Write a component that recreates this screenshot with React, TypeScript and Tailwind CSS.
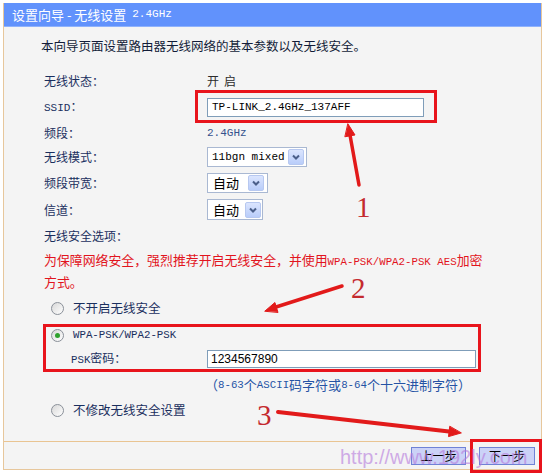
import React from "react";

function Radio({ checked }: { checked?: boolean }) {
  return (
    <span className="w-[13px] h-[13px] shrink-0 rounded-full border border-[#8a9099] bg-linear-to-br from-[#d8d8d8] to-white flex items-center justify-center">
      {checked && <span className="w-[5px] h-[5px] rounded-full bg-[#2ea12e]" />}
    </span>
  );
}

function DropBtn() {
  return (
    <span className="w-[16px] h-[16px] shrink-0 rounded-[2px] border border-[#b7c8f0] bg-linear-to-b from-[#dbe5fe] to-[#b9cdfa] flex items-center justify-center">
      <svg width="10" height="10" viewBox="0 0 10 10">
        <polyline points="2,3.5 5,6.5 8,3.5" fill="none" stroke="#4b5f8a" strokeWidth="2" />
      </svg>
    </span>
  );
}

export default function App() {
  return (
    <div className="relative w-[545px] h-[475px] bg-white pt-[3px] pl-[3px] font-['Noto_Sans_CJK_SC',sans-serif]">
      <div className="w-[539px] border-x border-b border-[#e7c79c]">
        {/* title bar */}
        <div className="h-[24px] bg-[#6192fc] border-b border-[#8fb2fc] flex items-center pl-[8px] text-white text-[13px] leading-none whitespace-pre">
          设置向导 - 无线设置 <span className="ml-[3px] font-['Liberation_Mono',monospace] text-[11px]">2.4GHz</span>
        </div>

        {/* body */}
        <div className="h-[415px] bg-[#f4f4f4] border-b border-[#e9c492] pl-[40px] pt-[10px] text-[12px] text-[#1a2f5e]">
          <div className="h-[18px] -ml-[3px] flex items-center text-[12.5px] text-[#121c38]">
            本向导页面设置路由器无线网络的基本参数以及无线安全。
          </div>

          <div className="mt-[17px] h-[18px] flex items-center">
            <span className="w-[163px]">无线状态：</span>
            <span className="text-[#2b2b2b] tracking-[5px]">开启</span>
          </div>

          <div className="h-[33px] flex items-center">
            <span className="w-[163px] font-['Liberation_Mono',monospace] text-[11px]">
              SSID<span className="font-['Noto_Sans_CJK_SC',sans-serif] text-[12px]">：</span>
            </span>
            <div className="-ml-[12px] h-[33px] border-[3px] border-[#e8141c] pl-[9px] pr-[10px] pt-[5px] pb-[3px]">
              <div className="w-[217px] h-[19px] bg-white border border-[#7f9db9] pl-[4px] flex items-center font-['Liberation_Mono',monospace] text-[11px] text-black">
                TP-LINK_2.4GHz_137AFF
              </div>
            </div>
          </div>

          <div className="mt-px h-[18px] flex items-center">
            <span className="w-[163px]">频段：</span>
            <span className="font-['Liberation_Mono',monospace] text-[11px] text-[#34528c]">2.4GHz</span>
          </div>

          <div className="mt-[5px] h-[20px] flex items-center">
            <span className="w-[163px]">无线模式：</span>
            <div className="w-[100px] h-[20px] bg-white border border-[#a9b8d2] flex items-center justify-between pl-[4px] pr-[2px]">
              <span className="font-['Liberation_Mono',monospace] text-[11px] text-black">11bgn mixed</span>
              <DropBtn />
            </div>
          </div>

          <div className="mt-[6px] h-[20px] flex items-center">
            <span className="w-[163px]">频段带宽：</span>
            <div className="w-[61px] h-[20px] bg-white border border-[#a9b8d2] flex items-center justify-between pl-[5px] pr-[3px]">
              <span className="text-[13px] text-black">自动</span>
              <DropBtn />
            </div>
          </div>

          <div className="mt-[6px] h-[21px] flex items-center">
            <span className="w-[163px]">信道：</span>
            <div className="w-[56px] h-[21px] bg-white border border-[#a9b8d2] flex items-center justify-between pl-[5px] pr-px">
              <span className="text-[13px] text-black">自动</span>
              <DropBtn />
            </div>
          </div>

          <div className="mt-[7px] h-[18px] flex items-center">无线安全选项：</div>

          <div className="mt-[5px] w-[450px] text-[12.9px] leading-[20px] text-[#e2141e]">
            为保障网络安全，强烈推荐开启无线安全，并使用<span className="font-['Liberation_Mono',monospace] text-[10.75px]">WPA-PSK/WPA2-PSK AES</span>加密
            <br />
            方式。
          </div>

          <div className="mt-[7px] h-[18px] flex items-center gap-[9px] pl-[7px] text-[12.5px]">
            <Radio />
            <span>不开启无线安全</span>
          </div>

          <div className="mt-[7px] -ml-px w-[438px] h-[48px] border-[3px] border-[#e8141c] pl-[5px] pr-[2px] flex flex-col">
            <div className="h-[16px] flex items-center gap-[9px]">
              <Radio checked />
              <span className="font-['Liberation_Mono',monospace] text-[10.75px]">WPA-PSK/WPA2-PSK</span>
            </div>
            <div className="mt-[7px] h-[18px] flex items-center">
              <span className="w-[156px] pl-[20px]">
                <span className="font-['Liberation_Mono',monospace] text-[10.75px]">PSK</span>密码：
              </span>
              <div className="w-[269px] h-[18px] bg-white border border-[#7f9db9] pl-[3px] flex items-center font-['Liberation_Sans',sans-serif] text-[12px] text-black">
                1234567890
              </div>
            </div>
          </div>

          <div className="mt-[4px] h-[18px] flex items-center pl-[161px] text-[13px] text-[#2553a5]">
            （<span className="font-['Liberation_Mono',monospace] text-[10.75px]">8-63</span>个
            <span className="font-['Liberation_Mono',monospace] text-[10.75px]">ASCII</span>码字符或
            <span className="font-['Liberation_Mono',monospace] text-[10.75px]">8-64</span>个十六进制字符）
          </div>

          <div className="mt-[7px] h-[18px] flex items-center gap-[9px] pl-[7px] text-[12.5px]">
            <Radio />
            <span>不修改无线安全设置</span>
          </div>
        </div>

        {/* footer */}
        <div className="h-[27px] bg-[#f4f4f4] flex items-center justify-end gap-[13px] pr-[6px] text-[12px] text-black">
          <button className="w-[55px] h-[18px] bg-[#cbd2f7] border border-[#6f82d6] leading-none">上一步</button>
          <button className="w-[56px] h-[18px] bg-[#cbd2f7] border border-[#6f82d6] leading-none">下一步</button>
        </div>
      </div>

      {/* annotations */}
      <svg className="absolute left-0 top-0 pointer-events-none" width="545" height="475">
        <g stroke="#e21a1a" strokeWidth="3.5" strokeLinecap="round" fill="#e21a1a">
          <line x1="359" y1="185" x2="350" y2="135" />
          <polygon points="348,124 355,135 345.2,136.7" strokeWidth="1" />
          <line x1="342" y1="286" x2="276" y2="307" />
          <polygon points="265,311 274.9,302.5 277.9,312.1" strokeWidth="1" />
          <line x1="278" y1="412" x2="449" y2="431.6" strokeWidth="4" />
          <polygon points="461,433 448.5,436.6 449.7,426.6" strokeWidth="1" />
        </g>
        <rect x="471.5" y="440.5" width="69" height="31" fill="none" stroke="#e8141c" strokeWidth="3" />
        <g fill="#c42a2e" fontFamily="Liberation Serif, serif" fontSize="29">
          <text x="356" y="217">1</text>
          <text x="351" y="298">2</text>
          <text x="257" y="425">3</text>
        </g>
      </svg>
      <span className="absolute left-[340px] top-[445px] text-[20px] leading-[24px] font-['Liberation_Sans',sans-serif] text-[#b679dc] opacity-60 pointer-events-none">
        http://www.192ly.com
      </span>
    </div>
  );
}
